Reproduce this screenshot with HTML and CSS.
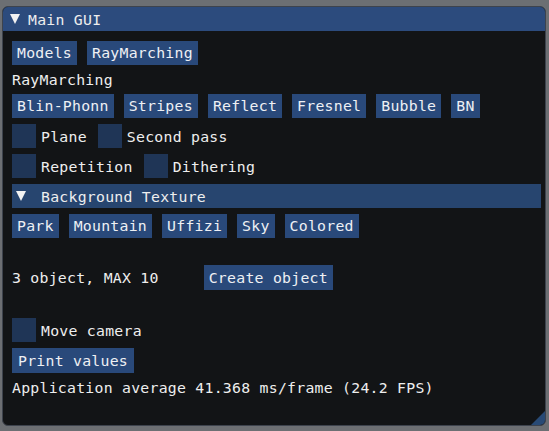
FILE: index.html
```html
<!DOCTYPE html>
<html>
<head>
<meta charset="utf-8">
<link rel="stylesheet" href="styles.css">
</head>
<body>
<div class="window">
  <div class="titlebar">
    <svg class="arrow" width="10" height="10" viewBox="0 0 10 10"><polygon points="0,0 10,0 5,10" fill="#f2f2f2"/></svg>
    <span>Main GUI</span>
  </div>
  <div class="content">
    <div class="row">
      <div class="btn">Models</div>
      <div class="btn">RayMarching</div>
    </div>
    <div class="text">RayMarching</div>
    <div class="row">
      <div class="btn">Blin-Phonn</div>
      <div class="btn">Stripes</div>
      <div class="btn">Reflect</div>
      <div class="btn">Fresnel</div>
      <div class="btn">Bubble</div>
      <div class="btn">BN</div>
    </div>
    <div class="row checks">
      <div class="check"><div class="box"></div><span>Plane</span></div>
      <div class="check"><div class="box"></div><span>Second pass</span></div>
    </div>
    <div class="row checks">
      <div class="check"><div class="box"></div><span>Repetition</span></div>
      <div class="check"><div class="box"></div><span>Dithering</span></div>
    </div>
    <div class="header">
      <svg class="arrow" width="10" height="10" viewBox="0 0 10 10"><polygon points="0,0 10,0 5,10" fill="#f2f2f2"/></svg>
      <span>Background Texture</span>
    </div>
    <div class="row">
      <div class="btn">Park</div>
      <div class="btn">Mountain</div>
      <div class="btn">Uffizi</div>
      <div class="btn">Sky</div>
      <div class="btn">Colored</div>
    </div>
    <div class="blank"></div>
    <div class="row">
      <div class="text">3 object, MAX 10</div>
      <div class="btn create">Create object</div>
    </div>
    <div class="blank b2"></div>
    <div class="row">
      <div class="check"><div class="box"></div><span>Move camera</span></div>
    </div>
    <div class="row">
      <div class="btn print">Print values</div>
    </div>
    <div class="text">Application average 41.368 ms/frame (24.2 FPS)</div>
  </div>
  <div class="grip"></div>
</div>
</body>
</html>
```

FILE: styles.css
```css
html, body {
  margin: 0;
  padding: 0;
  background: #6c6f73;
  width: 549px;
  height: 431px;
  overflow: hidden;
}
body {
  font-family: "DejaVu Sans Mono", "Liberation Mono", monospace;
  font-size: 14.8px;
  letter-spacing: 0.26px;
  color: #eeeeee;
}
.window {
  position: relative;
  margin: 6px 0 0 2px;
  width: 542px;
  height: 418px;
  background: #121416;
  border: 1px solid #3d434d;
  border-radius: 6px;
  overflow: hidden;
}
.titlebar {
  height: 24px;
  background: #2c4b7d;
  display: flex;
  align-items: center;
  padding-left: 7px;
  gap: 8px;
  line-height: 17px;
}
.arrow {
  display: block;
  flex: none;
}
.content {
  display: flex;
  flex-direction: column;
  gap: 6px;
  padding: 10px 4px 0 9px;
}
.row {
  display: flex;
  align-items: center;
  gap: 10px;
}
.checks {
  gap: 11px;
}
.text {
  height: 17px;
  line-height: 17px;
  white-space: pre;
}
.blank {
  height: 15px;
}
.b2 {
  height: 16px;
}
.btn {
  height: 24px;
  line-height: 24px;
  padding: 0 5px;
  background: #29497a;
  color: #eef0f4;
  white-space: pre;
}
.create {
  margin-left: 35px;
  height: 25px;
  line-height: 25px;
}
.print {
  padding: 0 6px;
  height: 25px;
  line-height: 25px;
}
.check {
  display: flex;
  align-items: center;
  gap: 5px;
  white-space: pre;
}
.box {
  width: 24px;
  height: 24px;
  background: #1f3556;
}
.header {
  height: 24px;
  background: #27456f;
  display: flex;
  align-items: center;
  padding-left: 4px;
  gap: 15px;
}
.grip {
  position: absolute;
  right: 0;
  bottom: 0;
  width: 0;
  height: 0;
  border-left: 14px solid transparent;
  border-bottom: 14px solid #284a75;
}
```
